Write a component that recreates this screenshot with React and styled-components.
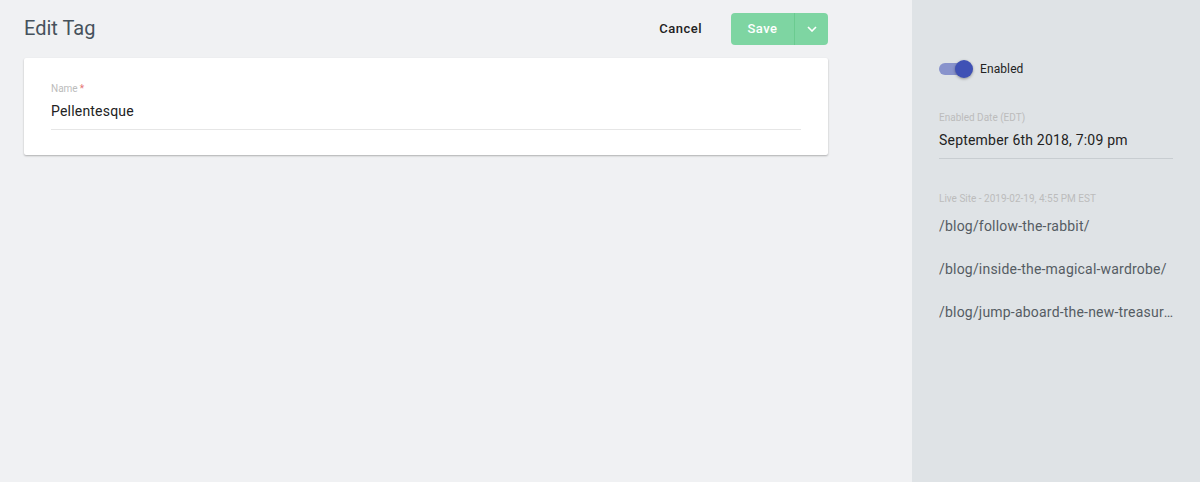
import React from "react";
import styled, { createGlobalStyle } from "styled-components";

const GlobalStyle = createGlobalStyle`
  html, body {
    margin: 0;
    padding: 0;
    font-family: Roboto, "Liberation Sans", sans-serif;
  }
  * { box-sizing: border-box; }
`;

const Page = styled.div`
  display: flex;
  width: 1200px;
  height: 482px;
  overflow: hidden;
`;

const Main = styled.div`
  flex: 0 0 912px;
  background: #f0f1f3;
  padding: 12px 84px 0 24px;
`;

const Header = styled.div`
  display: flex;
  align-items: center;
  height: 33px;
`;

const Title = styled.h1`
  flex: 1;
  margin: 0;
  font-size: 20px;
  font-weight: 400;
  color: #46525c;
  padding-bottom: 1px;
`;

const CancelButton = styled.button`
  border: none;
  background: none;
  font-family: inherit;
  font-size: 13px;
  font-weight: 500;
  letter-spacing: 0.5px;
  color: #222;
  padding: 0;
  margin-right: 29px;
  cursor: pointer;
`;

const SplitButton = styled.div`
  display: flex;
  height: 32px;
  width: 97px;
  border-radius: 4px;
  overflow: hidden;
  background: #7ed5a2;
`;

const SaveButton = styled.button`
  flex: 1;
  border: none;
  background: none;
  color: #fff;
  font-family: inherit;
  font-size: 13px;
  font-weight: 500;
  letter-spacing: 0.5px;
  padding: 0;
  border-right: 1px solid #6bcb90;
`;

const CaretButton = styled.button`
  width: 33px;
  border: none;
  background: none;
  display: flex;
  align-items: center;
  justify-content: center;
  padding: 0;
`;

const Card = styled.div`
  margin-top: 13px;
  background: #fff;
  border-radius: 2px;
  box-shadow: 0 1px 2px rgba(0, 0, 0, 0.28);
  padding: 25px 27px 25px;
`;

const Field = styled.div`
  display: flex;
  flex-direction: column;
  border-bottom: 1px solid ${(p) => p.$line};
`;

const Label = styled.label`
  font-size: 10px;
  color: #bcbcbc;
  line-height: 12px;
`;

const Required = styled.span`
  color: #e57373;
  margin-left: 2px;
`;

const Value = styled.div`
  font-size: 14px;
  color: #222;
  line-height: 20px;
  letter-spacing: 0.2px;
  padding: 6px 0 ${(p) => p.$pb}px;
`;

const Sidebar = styled.aside`
  flex: 1;
  background: #dfe3e6;
  padding: 59px 24px 0 27px;
`;

const ToggleRow = styled.div`
  display: flex;
  align-items: center;
  height: 20px;
`;

const Track = styled.div`
  position: relative;
  width: 32px;
  height: 12px;
  border-radius: 6px;
  background: #8893cc;
  margin-right: 9px;
`;

const Knob = styled.div`
  position: absolute;
  right: -2px;
  top: -3px;
  width: 18px;
  height: 18px;
  border-radius: 50%;
  background: #3f51b5;
  box-shadow: 0 1px 3px rgba(0, 0, 0, 0.35);
`;

const ToggleLabel = styled.span`
  font-size: 12px;
  color: #222;
  letter-spacing: 0.1px;
`;

const DateField = styled.div`
  margin-top: 33px;
  width: 234px;
`;

const LiveSite = styled.div`
  margin-top: 34px;
  display: flex;
  flex-direction: column;
`;

const LinkItem = styled.div`
  font-size: 14px;
  color: #555c63;
  line-height: 20px;
  letter-spacing: 0.2px;
  width: 237px;
  white-space: nowrap;
  overflow: hidden;
  text-overflow: ellipsis;
  margin-top: ${(p) => (p.$first ? 11 : 23)}px;
`;

const links = [
  "/blog/follow-the-rabbit/",
  "/blog/inside-the-magical-wardrobe/",
  "/blog/jump-aboard-the-new-treasure-ship/",
];

export default function App() {
  return (
    <Page>
      <GlobalStyle />
      <Main>
        <Header>
          <Title>Edit Tag</Title>
          <CancelButton>Cancel</CancelButton>
          <SplitButton>
            <SaveButton>Save</SaveButton>
            <CaretButton>
              <svg width="10" height="6" viewBox="0 0 10 6" fill="none">
                <path d="M1 1l4 4 4-4" stroke="#fff" strokeWidth="1.6" />
              </svg>
            </CaretButton>
          </SplitButton>
        </Header>
        <Card>
          <Field $line="#e6e6e6">
            <Label>
              Name<Required>*</Required>
            </Label>
            <Value $pb={8}>Pellentesque</Value>
          </Field>
        </Card>
      </Main>
      <Sidebar>
        <ToggleRow>
          <Track>
            <Knob />
          </Track>
          <ToggleLabel>Enabled</ToggleLabel>
        </ToggleRow>
        <DateField>
          <Field $line="#c8cdd1">
            <Label>Enabled Date (EDT)</Label>
            <Value $pb={8}>September 6th 2018, 7:09 pm</Value>
          </Field>
        </DateField>
        <LiveSite>
          <Label>Live Site - 2019-02-19, 4:55 PM EST</Label>
          {links.map((l, i) => (
            <LinkItem key={l} $first={i === 0}>
              {l}
            </LinkItem>
          ))}
        </LiveSite>
      </Sidebar>
    </Page>
  );
}
